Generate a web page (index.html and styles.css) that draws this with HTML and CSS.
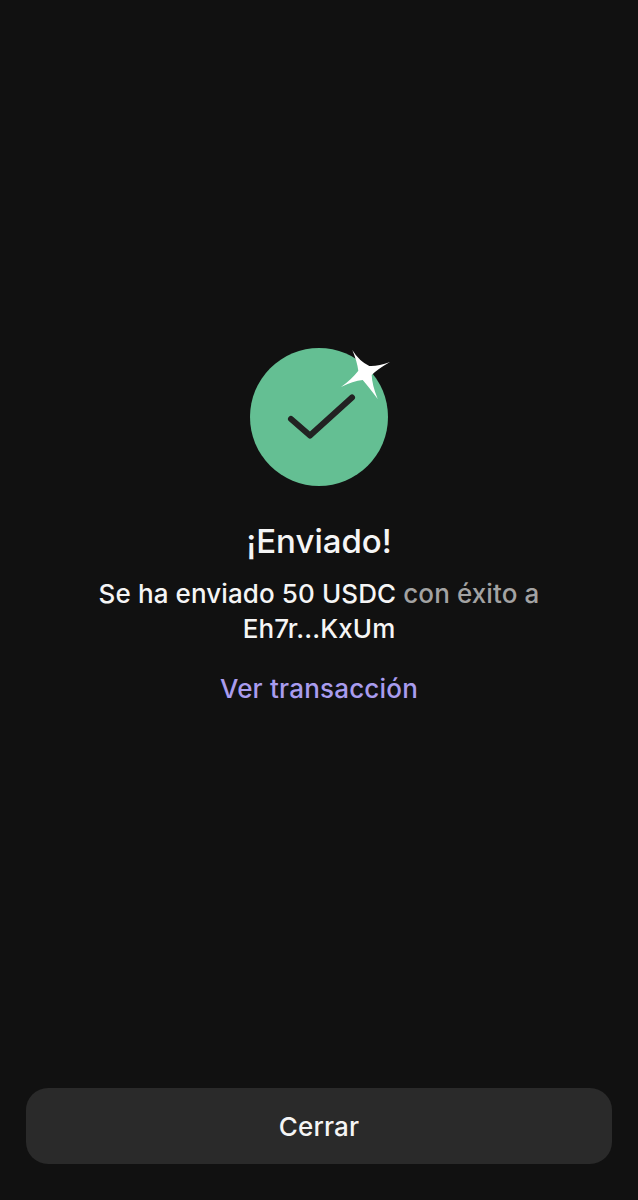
FILE: index.html
```html
<!DOCTYPE html>
<html lang="es">
<head>
<meta charset="utf-8">
<title>Enviado</title>
<link rel="stylesheet" href="styles.css">
</head>
<body>
<main class="screen">
  <section class="content">
    <svg class="badge" width="140" height="140" viewBox="0 0 140 140" aria-hidden="true">
      <circle cx="69" cy="69" r="69" fill="#64bf93"/>
      <path d="M41 71 60 87.5 102 49.5" fill="none" stroke="#222222" stroke-width="6" stroke-linecap="round" stroke-linejoin="round"/>
      <path d="M102.3 2Q109 13 119.3 18Q128 18.5 140 14Q127 21.5 121.7 27Q122 37 127.7 51Q118 38 112.7 32Q103 33 91 39Q102 31 108.3 22.7Q107 13 102.3 2Z" fill="#ffffff"/>
    </svg>
    <h1 class="title">¡Enviado!</h1>
    <p class="message"><span class="strong">Se ha enviado 50 USDC</span> <span class="muted">con éxito a</span> <span class="strong">Eh7r...KxUm</span></p>
    <a class="link" href="#">Ver transacción</a>
  </section>
  <button class="close" type="button">Cerrar</button>
</main>
</body>
</html>
```
FILE: styles.css
```css
* { box-sizing: border-box; }
html, body { margin: 0; height: 100%; }
body { background: #111111; font-family: Inter, "Liberation Sans", sans-serif; color: #f5f5f5; }
.screen { height: 1200px; display: flex; flex-direction: column; align-items: center; padding: 348px 26px 36px; }
.content { flex: 1; display: flex; flex-direction: column; align-items: center; text-align: center; width: 100%; }
.badge { display: block; margin-left: 2px; overflow: visible; }
.title { margin: 31px 0 0; font-size: 33px; line-height: 44px; font-weight: 500; }
.message { margin: 13px 0 0; width: 460px; font-size: 26px; line-height: 35px; font-weight: 500; letter-spacing: 0.1px; }
.strong { color: #f5f5f5; }
.muted { color: #a3a3a3; }
.link { margin-top: 25px; font-size: 26px; line-height: 36px; font-weight: 500; letter-spacing: 0.2px; color: #a99cee; text-decoration: none; }
.close { width: 586px; height: 76px; border: 0; border-radius: 22px; background: #2a2a2a; color: #f5f5f5; font: 500 26px Inter, "Liberation Sans", sans-serif; letter-spacing: 0.2px; }
```
